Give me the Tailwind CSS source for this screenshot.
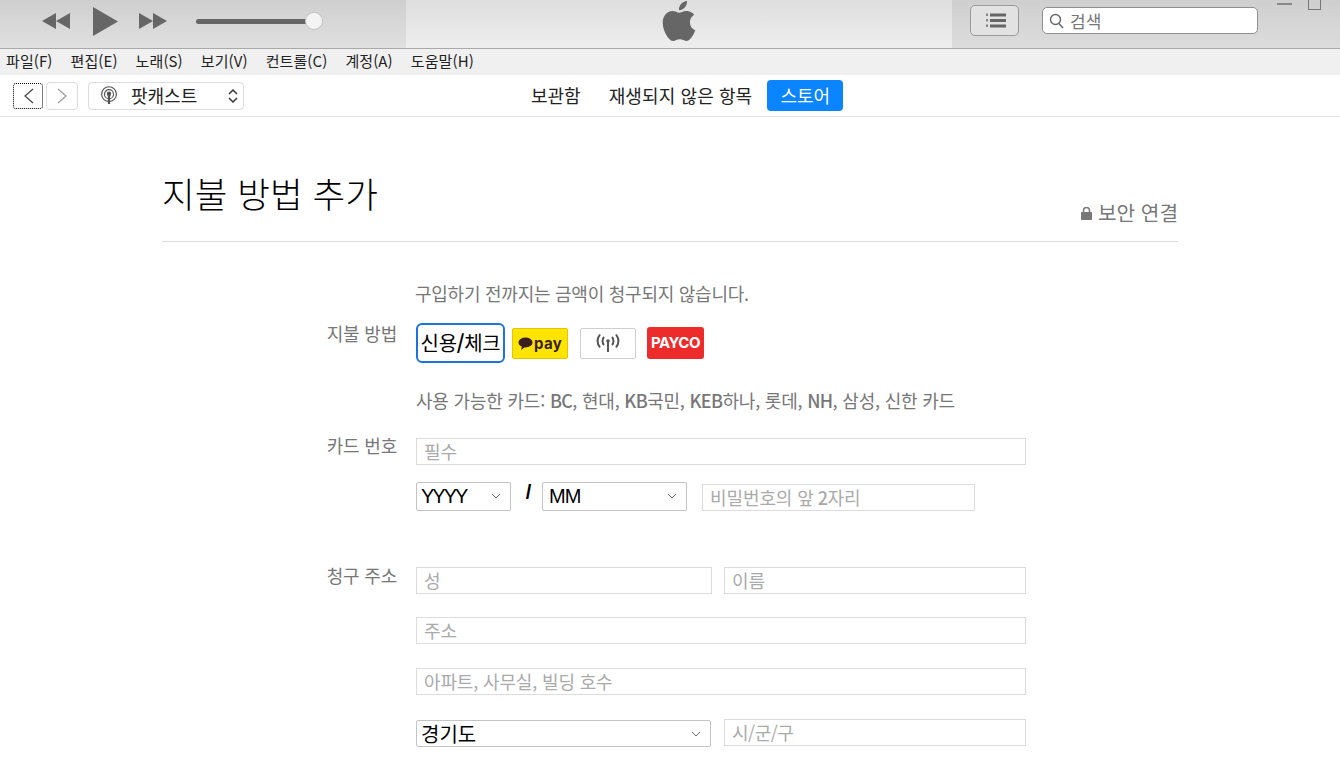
<!DOCTYPE html>
<html lang="ko">
<head>
<meta charset="utf-8">
<script src="https://cdn.jsdelivr.net/npm/@tailwindcss/browser@4"></script>
<title>지불 방법 추가</title>
</head>
<body class="w-[1340px] h-[760px] overflow-hidden bg-white font-['Noto_Sans_CJK_KR','Noto_Sans',sans-serif]">
<!-- Player bar -->
<header class="h-[49px] flex border-b border-[#a9a9a9] overflow-hidden">
  <div class="w-[406px] flex items-center bg-gradient-to-b from-[#cfcfcf] to-[#e0e0e0]">
    <svg class="ml-[42px] mt-[-6px]" width="28" height="16" viewBox="0 0 28 16" fill="#666"><path d="M14 0v16L0 8zM28 0v16L14 8z"/></svg>
    <svg class="ml-[23px] mt-[-6px]" width="26" height="29" viewBox="0 0 26 29" fill="#666"><path d="M0 0l25 14.500L0 29z"/></svg>
    <svg class="ml-[20px] mt-[-6px]" width="28" height="16" viewBox="0 0 28 16" fill="#666"><path d="M0 0v16l14-8zM14 0v16l14-8z"/></svg>
    <div class="ml-[29px] mt-[-6px] relative w-[118px] h-[5px] rounded-full bg-[#666]">
      <div class="absolute right-[-9px] top-[-7px] size-[18px] rounded-full bg-[#f4f4f4] border border-[#c4c4c4]"></div>
    </div>
  </div>
  <div class="w-[546px] flex justify-center bg-gradient-to-b from-[#dedede] to-[#eeeeee]">
    <svg class="mt-[1px]" width="34" height="40" viewBox="0 0 814 1000" fill="#666"><path d="M788 341c-6 4-108 62-108 190 0 148 130 200 134 202-1 3-21 72-69 142-43 62-88 123-156 123s-86-39-164-39c-76 0-103 41-165 41s-106-57-156-127C46 792 0 666 0 546c0-192 125-294 248-294 65 0 120 43 161 43 39 0 100-46 175-46 28 0 130 3 204 92zM555 158c31-37 53-88 53-139 0-7-1-14-2-19-50 2-110 33-146 75-28 32-55 83-55 135 0 8 1 16 2 18 3 1 8 1 13 1 45 0 102-30 135-71z"/></svg>
  </div>
  <div class="flex-1 flex bg-gradient-to-b from-[#cfcfcf] to-[#dcdcdc] relative">
    <div class="ml-[18px] mt-[5px] w-[49px] h-[31px] rounded-[5px] border border-[#9a9a9a] bg-[#e2e2e2] flex items-center justify-center">
      <svg width="22" height="15" viewBox="0 0 22 15" fill="#666"><rect x="6" y="0.500" width="16" height="3"/><rect x="6" y="6" width="16" height="3"/><rect x="6" y="11.500" width="16" height="3"/><rect x="2" y="0.500" width="2" height="2.500" fill="#888"/><rect x="2" y="6" width="2" height="2.500" fill="#888"/><rect x="2" y="11.500" width="2" height="2.500" fill="#888"/></svg>
    </div>
    <div class="ml-[23px] mt-[7px] w-[216px] h-[27px] rounded-[5px] border border-[#8f8f8f] bg-white flex items-center pl-[6px] gap-[6px] text-[17px] text-[#777]">
      <svg width="15" height="16" viewBox="0 0 15 16" fill="none" stroke="#666" stroke-width="1.400"><circle cx="6.500" cy="6.500" r="5"/><path d="M10 10.500l4 4.500"/></svg>
      <span>검색</span>
    </div>
    <div class="absolute left-[325px] top-[3px] w-[15px] h-[2px] bg-[#888]"></div>
    <div class="absolute left-[356px] top-[-3px] w-[13px] h-[13px] border border-[#777]"></div>
  </div>
</header>
<!-- Menu bar -->
<nav class="h-[26px] bg-[#f0f0f0] flex items-center pl-[6px] pb-[2px] gap-[18px] text-[15px] text-[#222] tracking-[0.100px]">
  <span>파일(F)</span><span>편집(E)</span><span>노래(S)</span><span>보기(V)</span><span>컨트롤(C)</span><span>계정(A)</span><span>도움말(H)</span>
</nav>
<!-- Nav bar -->
<div class="h-[42px] border-b border-[#e4e4e4] relative flex items-center">
  <div class="ml-[13px] w-[30px] h-[26px] rounded-[3px] border border-dotted border-black flex items-center justify-center">
    <svg width="11" height="16" viewBox="0 0 11 16" fill="none" stroke="#444" stroke-width="1.200"><path d="M10 1L2 8l8 7"/></svg>
  </div>
  <div class="ml-[3px] w-[32px] h-[28px] rounded-[4px] border border-[#dcdcdc] flex items-center justify-center">
    <svg width="11" height="16" viewBox="0 0 11 16" fill="none" stroke="#999" stroke-width="1.200"><path d="M1 1l8 7-8 7"/></svg>
  </div>
  <div class="ml-[10px] w-[156px] h-[28px] rounded-[4px] border border-[#dcdcdc] flex items-center pl-[11px] text-[18px] leading-[24px] text-[#222]">
    <svg width="18" height="19" viewBox="0 0 20 21" fill="none" stroke="#555" stroke-width="1.300"><circle cx="10" cy="9" r="8.200"/><circle cx="10" cy="9" r="5"/><circle cx="10" cy="8.500" r="1.800" fill="#555"/><path d="M10 10v10" stroke-width="2.600"/></svg>
    <span class="ml-[13px] mt-[-2px]">팟캐스트</span>
    <svg class="ml-auto mr-[5px]" width="10" height="16" viewBox="0 0 10 16" fill="none" stroke="#333" stroke-width="1.500"><path d="M1 6l4-4 4 4M1 10l4 4 4-4"/></svg>
  </div>
  <div class="absolute left-[517px] top-[5px] h-[31px] flex items-center text-[18px] leading-[24px] text-[#222]">
    <span class="pl-[14px] mt-[-2px]">보관함</span>
    <span class="ml-[28px] mt-[-2px] tracking-[0.100px]">재생되지 않은 항목</span>
    <span class="ml-[15px] w-[76px] h-[31px] rounded-[4px] bg-[#0a84ff] text-white flex items-center justify-center pb-[2px]">스토어</span>
  </div>
</div>
<!-- Content -->
<main class="mx-[162px] w-[1016px]">
  <div class="h-[125px] border-b border-[#dcdcdc] flex justify-between items-end pb-[14px]">
    <h1 class="text-[35.500px] leading-[50px] font-light text-black mb-[9px]">지불 방법 추가</h1>
    <div class="flex items-center gap-[6px] text-[20.200px] leading-[28px] text-[#777]">
      <svg width="11" height="13" viewBox="0 0 11 13" fill="#777"><rect x="0" y="5" width="11" height="8" rx="1"/><path d="M2.500 5V3.500a3 3 0 0 1 6 0V5" fill="none" stroke="#777" stroke-width="1.500"/></svg>
      <span>보안 연결</span>
    </div>
  </div>
  <form class="text-[#777] text-[18px]">
    <p class="ml-[253px] mt-[38px] leading-[26px] tracking-[-0.250px]">구입하기 전까지는 금액이 청구되지 않습니다.</p>
    <div class="flex mt-[17px]">
      <label class="w-[235px] text-right leading-[24px] mt-[-2px] tracking-[-0.200px]">지불 방법</label>
      <div class="ml-[19px] flex items-center">
        <div class="w-[89px] h-[40px] rounded-[6px] border-2 border-[#1b74d8] flex items-center justify-center text-[20px] text-black tracking-[-0.300px]">신용<b>/</b>체크</div>
        <div class="ml-[7px] w-[56px] h-[31px] rounded-[2px] bg-[#ffe400] border border-[#e0c800] flex items-center justify-center gap-[1px]">
          <svg width="15" height="13" viewBox="0 0 15 13" fill="#3a1d1d"><ellipse cx="7.500" cy="5.500" rx="7" ry="5"/><path d="M4 9l-1 4 4-3z"/></svg>
          <span class="text-[15px] leading-none font-bold text-[#3a1d1d] tracking-[0.300px] font-['Inter',sans-serif]">pay</span>
        </div>
        <div class="ml-[12px] w-[56px] h-[31px] rounded-[2px] border border-[#cfcfcf] flex items-center justify-center">
          <svg width="26" height="20" viewBox="0 0 26 20" fill="none" stroke="#555" stroke-width="2"><circle cx="13" cy="8" r="1.800" fill="#555" stroke="none"/><path d="M13 9v10M9 4c-2 2-2 6 0 8M17 4c2 2 2 6 0 8M5 1.500c-3 4-3 9 0 13M21 1.500c3 4 3 9 0 13"/></svg>
        </div>
        <div class="ml-[11px] w-[57px] h-[32px] rounded-[3px] bg-[#ee2b2b] flex items-center justify-center text-[15px] font-bold text-white tracking-[-0.500px] font-['Inter',sans-serif]">PAYCO</div>
      </div>
    </div>
    <p class="ml-[254px] mt-[23px] leading-[28px] tracking-[-0.200px]">사용 가능한 카드: <span class="font-medium tracking-[-0.600px]">BC</span>, 현대, <span class="font-medium tracking-[-0.600px]">KB</span>국민, <span class="font-medium tracking-[-0.600px]">KEB</span>하나, 롯데, <span class="font-medium tracking-[-0.600px]">NH</span>, 삼성, 신한 카드</p>
    <div class="flex mt-[24px]">
      <label class="w-[235px] text-right leading-[14px] tracking-[-0.200px]">카드 번호</label>
      <div class="ml-[19px] w-[610px] h-[27px] border border-[#dcdcdc] flex items-center pl-[7px] text-[#aaa]">필수</div>
    </div>
    <div class="flex items-start mt-[17px] ml-[254px]">
      <div class="w-[95px] h-[29px] rounded-[2px] border border-[#c4c4c4] flex items-center pl-[4px] pr-[9px] pb-[1px] text-[20px] text-black tracking-[-2px] font-['Liberation_Sans',sans-serif]">YYYY<svg class="ml-auto" width="10" height="6" viewBox="0 0 10 6" fill="none" stroke="#666"><path d="M1 1l4 4 4-4"/></svg></div>
      <span class="w-[31px] pl-[4px] text-center text-[20px] leading-[20px] text-black font-bold font-['Liberation_Sans',sans-serif]">/</span>
      <div class="w-[145px] h-[29px] rounded-[2px] border border-[#c4c4c4] flex items-center pl-[6px] pr-[9px] pb-[1px] text-[20px] text-black tracking-[-0.800px] font-['Liberation_Sans',sans-serif]">MM<svg class="ml-auto" width="10" height="6" viewBox="0 0 10 6" fill="none" stroke="#666"><path d="M1 1l4 4 4-4"/></svg></div>
      <div class="ml-[15px] mt-[2px] w-[273px] h-[27px] border border-[#dcdcdc] flex items-center pl-[7px] text-[#aaa] tracking-[-0.100px]">비밀번호의 앞 <span class="font-medium ml-[4px] tracking-[-0.500px]">2</span>자리</div>
    </div>
    <div class="flex mt-[56px]">
      <label class="w-[235px] text-right leading-[16px] tracking-[-0.200px]">청구 주소</label>
      <div class="ml-[19px] w-[296px] h-[27px] border border-[#dcdcdc] flex items-center pl-[7px] text-[#aaa]">성</div>
      <div class="ml-[12px] w-[302px] h-[27px] border border-[#dcdcdc] flex items-center pl-[7px] text-[#aaa]">이름</div>
    </div>
    <div class="ml-[254px] mt-[23px] w-[610px] h-[27px] border border-[#dcdcdc] flex items-center pl-[7px] text-[#aaa]">주소</div>
    <div class="ml-[254px] mt-[24px] w-[610px] h-[27px] border border-[#dcdcdc] flex items-center pl-[7px] text-[#aaa] tracking-[-0.150px]">아파트, 사무실, 빌딩 호수</div>
    <div class="flex items-start ml-[254px] mt-[24px]">
      <div class="mt-[1px] w-[295px] h-[27px] rounded-[2px] border border-[#c4c4c4] flex items-center pl-[4px] pr-[9px] text-[20px] text-black">경기도<svg class="ml-auto" width="10" height="6" viewBox="0 0 10 6" fill="none" stroke="#666"><path d="M1 1l4 4 4-4"/></svg></div>
      <div class="ml-[13px] w-[302px] h-[27px] border border-[#dcdcdc] flex items-center pl-[7px] text-[#aaa] tracking-[-0.500px]">시/군/구</div>
    </div>
  </form>
</main>
</body>
</html>
